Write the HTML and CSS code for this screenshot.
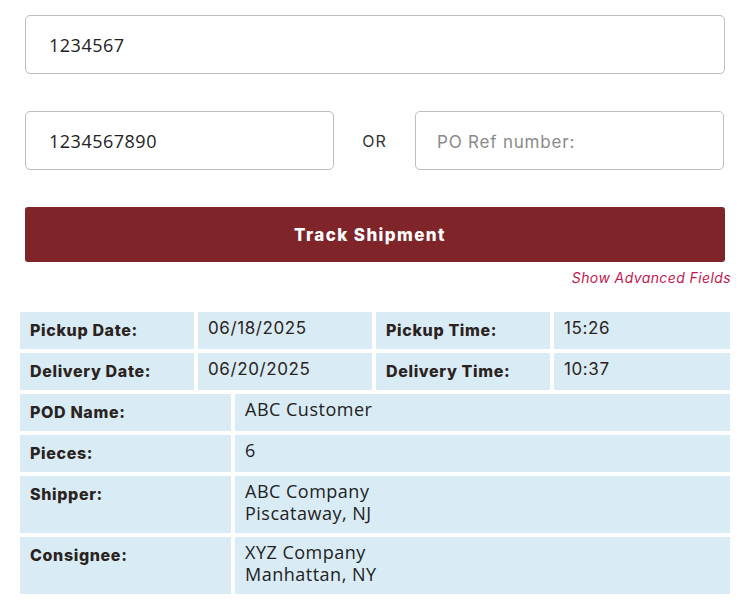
FILE: index.html
```html
<!DOCTYPE html>
<html>
<head>
<meta charset="utf-8">
<link rel="stylesheet" href="styles.css">
</head>
<body>
<div class="page">
  <form class="track-form">
    <input class="field field-full" type="text" value="1234567">
    <div class="field-row">
      <input class="field field-half" type="text" value="1234567890">
      <span class="or">OR</span>
      <input class="field field-half field-po" type="text" placeholder="PO Ref number:">
    </div>
    <button class="track-btn" type="button">Track Shipment</button>
    <div class="adv"><a class="adv-link">Show Advanced Fields</a></div>
  </form>

  <div class="results">
    <div class="grid4">
      <div class="cell label">Pickup Date:</div>
      <div class="cell value sm">06/18/2025</div>
      <div class="cell label">Pickup Time:</div>
      <div class="cell value sm">15:26</div>
      <div class="cell label">Delivery Date:</div>
      <div class="cell value sm">06/20/2025</div>
      <div class="cell label">Delivery Time:</div>
      <div class="cell value sm">10:37</div>
    </div>
    <div class="grid2">
      <div class="cell label">POD Name:</div>
      <div class="cell value">ABC Customer</div>
      <div class="cell label">Pieces:</div>
      <div class="cell value">6</div>
      <div class="cell label">Shipper:</div>
      <div class="cell value">ABC Company<br>Piscataway, NJ</div>
      <div class="cell label">Consignee:</div>
      <div class="cell value">XYZ Company<br>Manhattan, NY</div>
    </div>
  </div>
</div>
</body>
</html>
```

FILE: styles.css
```css
* { box-sizing: border-box; }
html, body { margin: 0; padding: 0; background: #fff; }
body { font-family: "Open Sans", "Liberation Sans", sans-serif; color: #222; }

.page { padding: 15px 23px 0 20px; width: 753px; }

.track-form { padding: 0 5px; }

.field {
  display: block;
  height: 59px;
  border: 1px solid #bdbdbd;
  border-radius: 5px;
  padding: 0 23px;
  font-family: "Open Sans", sans-serif;
  font-size: 18px;
  letter-spacing: 0.5px;
  color: #222;
  background: #fff;
  outline: none;
}
.field::placeholder {
  color: #8a8a8a;
  font-family: "Inter", "Liberation Sans", sans-serif;
  font-size: 17px;
  letter-spacing: 0.8px;
}
.field-full { width: 100%; }

.field-row {
  display: flex;
  align-items: center;
  margin-top: 37px;
}
.field-half { width: 309px; }
.field-po { padding-left: 21px; }
.or {
  width: 81px;
  text-align: center;
  font-family: "Inter", "Liberation Sans", sans-serif;
  font-size: 16px;
  letter-spacing: 1px;
  color: #333;
}

.track-btn {
  display: block;
  width: 100%;
  height: 55px;
  margin-top: 37px;
  padding: 0 10px 0 0;
  border: none;
  border-radius: 3px;
  background: #7f2428;
  color: #fff;
  font-family: "Inter", "Liberation Sans", sans-serif;
  font-weight: 800;
  font-size: 17px;
  letter-spacing: 1.4px;
}

.adv {
  text-align: right;
  margin-right: -6px;
  margin-top: 5px;
  line-height: 20px;
  height: 20px;
}
.adv-link {
  font-family: "Inter", "Liberation Sans", sans-serif;
  font-style: italic;
  font-size: 14px;
  letter-spacing: 0.4px;
  color: #c4184d;
}

.results {
  display: flex;
  flex-direction: column;
  gap: 4px;
  width: 710px;
  margin-top: 25px;
}
.grid4 {
  display: grid;
  grid-template-columns: 174px 174px 174px 176px;
  gap: 4px;
}
.grid2 {
  display: grid;
  grid-template-columns: 211px 495px;
  gap: 4px;
}
.cell { background: #d9ebf5; }
.label {
  padding: 9px 10px;
  font-family: "Inter", "Liberation Sans", sans-serif;
  font-weight: 800;
  font-size: 16px;
  line-height: 19px;
  letter-spacing: 0.65px;
  color: #2a2320;
}
.value {
  padding: 4px 10px 9px;
  font-family: "Open Sans", sans-serif;
  font-size: 18px;
  line-height: 22px;
  letter-spacing: 0.5px;
  color: #222;
}
.value.sm {
  font-family: "Inter", "Liberation Sans", sans-serif;
  font-size: 17px;
  line-height: 20px;
  letter-spacing: 0.6px;
  padding-top: 6px;
  color: #2a2320;
}
```
